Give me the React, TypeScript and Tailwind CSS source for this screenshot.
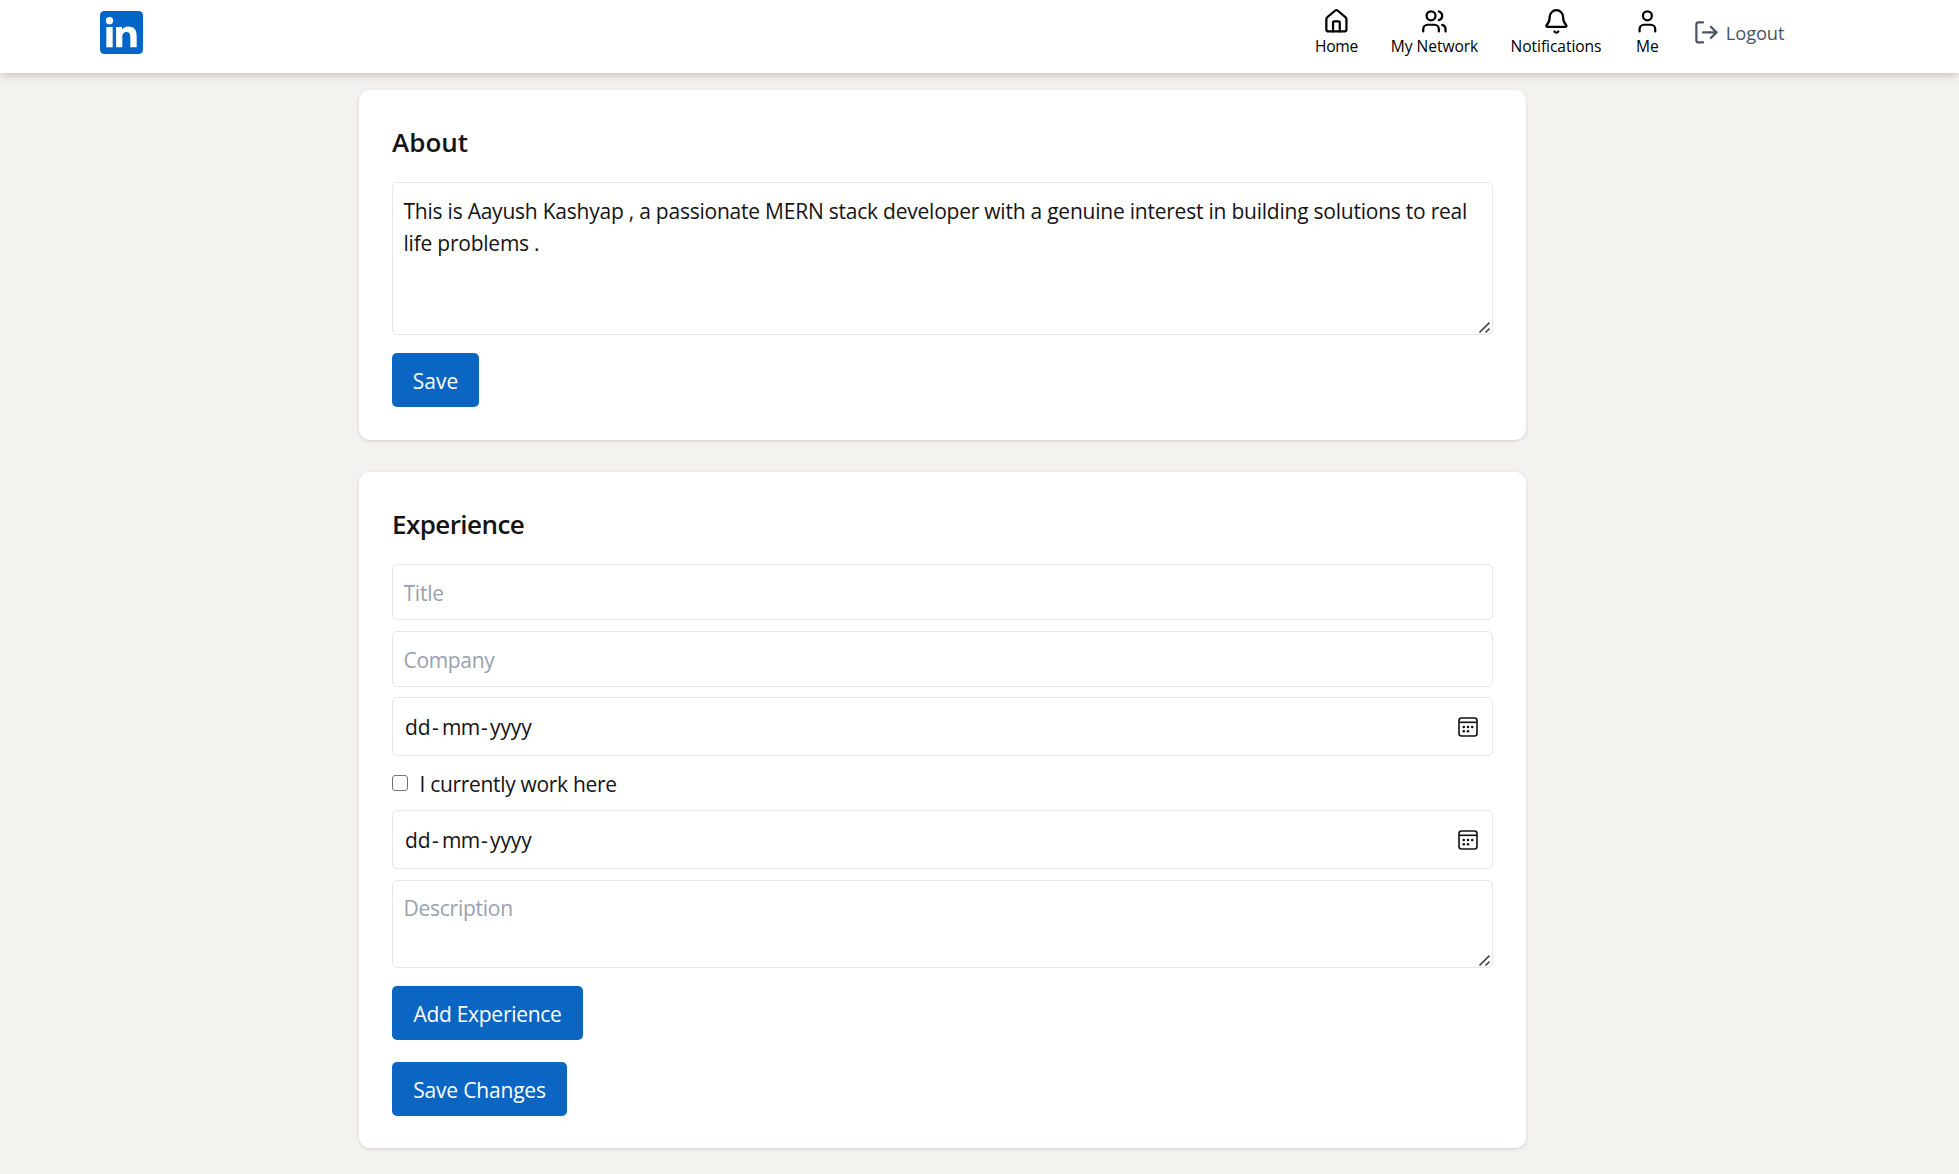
import { Bell, House, LogOut, User, Users } from "lucide-react";
import type { ReactNode } from "react";

function Logo() {
  return (
    <svg viewBox="60 33 129 129" className="size-[43px]" aria-label="LinkedIn">
      <rect x="60" y="33" width="129" height="129" rx="13" fill="#0266c8" />
      <g fill="#fff">
        <circle cx="88.5" cy="62" r="11" />
        <path d="M79 81h19v61H79z" />
        <path d="M108 81h18v8c3-5 9-9.500 18.500-9.500 19.500 0 25.500 11.500 25.500 29.500v33h-19v-29.500c0-8-1-16.500-11-16.500s-13 8-13 16v30h-18.500z" />
      </g>
    </svg>
  );
}

function NavItem({ icon, width, label }: { icon: ReactNode; width: string; label: ReactNode }) {
  return (
    <a className={`flex shrink-0 flex-col items-center ${width}`}>
      {icon}
      <span className="whitespace-nowrap text-[15.6px] leading-[23px]">{label}</span>
    </a>
  );
}

function ResizeGrip() {
  return (
    <svg viewBox="0 0 11 11" className="pointer-events-none absolute right-[3px] bottom-[2px] size-[11px]" fill="none" stroke="#4a4a4a" strokeWidth="1.6">
      <path d="M0.500 10.500 10.500 0.500M6.500 10.500l4-4" />
    </svg>
  );
}

function CalendarIcon() {
  return (
    <svg viewBox="0 0 20 20" className="size-5" fill="none" stroke="#111" strokeWidth="1.6">
      <rect x="1" y="1" width="18" height="18" rx="2.500" />
      <path d="M1 5.300h18" />
      <g fill="#111" stroke="none">
        <circle cx="5.800" cy="10" r="1.300" />
        <circle cx="10" cy="10" r="1.300" />
        <circle cx="14.200" cy="10" r="1.300" />
        <circle cx="5.800" cy="14.200" r="1.300" />
        <circle cx="10" cy="14.200" r="1.300" />
      </g>
    </svg>
  );
}

function DateField({ className }: { className: string }) {
  return (
    <div className={`flex h-[59px] items-center justify-between rounded-[5px] border border-gray-200 pr-[14px] pl-3 leading-8 ${className}`}>
      <span className="flex">
        <span className="w-[27px]">dd</span>
        <span className="w-[10px]">-</span>
        <span className="w-[39px] tracking-[-0.6px]">mm</span>
        <span className="w-[9px]">-</span>
        <span className="tracking-[-0.1px]">yyyy</span>
      </span>
      <CalendarIcon />
    </div>
  );
}

const field =
  "block w-full rounded-[5px] border border-gray-200 px-[10.5px] leading-8 placeholder:text-gray-400 placeholder:opacity-100 outline-none";
const button = "block h-[54px] rounded-[5px] bg-[#0a66c2] text-center leading-[56px] text-white";
const card =
  "ml-[359px] w-[1167px] rounded-[11px] bg-white px-[33px] pt-[33px] shadow-[0_1px_4px_rgba(0,0,0,0.1),0_1px_3px_-1px_rgba(0,0,0,0.1)]";
const heading = "text-[26px] font-semibold leading-[38px]";

export default function App() {
  return (
    <div className="h-[1174px] overflow-hidden bg-[#f3f2ef] font-['Open_Sans','Noto_Sans',sans-serif] text-[21px] text-[#141414]">
      <header className="relative flex h-[73px] items-start justify-between bg-white pt-2 pr-[173px] pl-[100px] text-black shadow-[0_5px_8px_-1px_rgba(0,0,0,0.1),0_3px_5px_-2px_rgba(0,0,0,0.1)]">
        <div className="pt-[3px]">
          <Logo />
        </div>
        <nav className="flex gap-8">
          <NavItem width="w-[45px]" icon={<House size={26.8} />} label={<span className="tracking-[-0.27px]">Home</span>} />
          <NavItem width="w-[87px]" icon={<Users size={26.8} />} label={<span className="tracking-[-0.07px]">My Network</span>} />
          <NavItem width="w-[92px]" icon={<Bell size={26.8} />} label={<span className="tracking-[-0.08px]">Notifications</span>} />
          <NavItem width="w-[27px]" icon={<User size={26.8} />} label="Me" />
          <a className="flex w-[93px] gap-[6px] pt-[11px] text-[18.3px] leading-7 tracking-[-0.1px] text-gray-600">
            <LogOut size={26.8} className="shrink-0" />
            <span>Logout</span>
          </a>
        </nav>
      </header>

      <section className={`mt-[17px] h-[350px] ${card}`}>
        <h2 className={heading}>About</h2>
        <div className="relative mt-[21px]">
          <textarea
            className={`h-[153px] resize-none pt-3 pb-[10px] tracking-[-0.23px] ${field}`}
            defaultValue={"This is Aayush Kashyap , a passionate MERN stack developer with a genuine interest in building solutions to real life problems ."}
          />
          <ResizeGrip />
        </div>
        <button className={`mt-[18px] w-[87px] ${button}`}>Save</button>
      </section>

      <section className={`mt-8 h-[676px] ${card}`}>
        <h2 className={`tracking-[-0.57px] ${heading}`}>Experience</h2>
        <input placeholder="Title" className={`mt-[21px] h-[56px] pt-[2px] tracking-[-0.23px] ${field}`} />
        <input placeholder="Company" className={`mt-[11px] h-[56px] pt-[2px] tracking-[-0.32px] ${field}`} />
        <DateField className="mt-[10px]" />
        <label className="mt-[11px] flex h-[34px] items-center">
          <input type="checkbox" className="mb-[3px] size-4 appearance-none rounded-[3px] border-[1.5px] border-[#767676]" />
          <span className="ml-[11.5px] leading-8 tracking-[-0.32px]">I currently work here</span>
        </label>
        <DateField className="mt-[9px]" />
        <div className="relative mt-[11px]">
          <textarea placeholder="Description" className={`h-[88px] resize-none py-[11px] tracking-[-0.25px] ${field}`} />
          <ResizeGrip />
        </div>
        <button className={`mt-[18px] w-[191px] tracking-[-0.28px] ${button}`}>Add Experience</button>
        <button className={`mt-[22px] w-[175px] tracking-[-0.18px] ${button}`}>Save Changes</button>
      </section>
    </div>
  );
}
